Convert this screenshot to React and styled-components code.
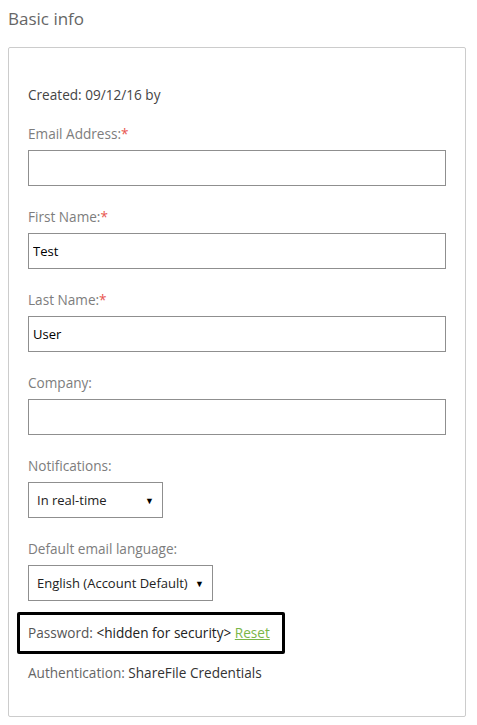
import React from "react";
import styled, { createGlobalStyle } from "styled-components";

const GlobalStyle = createGlobalStyle`
  html, body {
    margin: 0;
    padding: 0;
    background: #ffffff;
  }
  body {
    font-family: "Open Sans", "Noto Sans", sans-serif;
    -webkit-font-smoothing: antialiased;
  }
`;

const Page = styled.div`
  width: 477px;
  height: 725px;
  padding: 8px 11px 0 8px;
  box-sizing: border-box;
`;

const Title = styled.h2`
  margin: 0;
  font-size: 17px;
  font-weight: 400;
  line-height: 22px;
  color: #666666;
`;

const Panel = styled.section`
  margin-top: 17px;
  border: 1px solid #cccccc;
  border-radius: 2px;
  padding: 38px 19px 34px 19px;
  display: flex;
  flex-direction: column;
`;

const Created = styled.div`
  font-size: 13.6px;
  line-height: 18px;
  color: #444444;
  margin-bottom: 21px;
`;

const Field = styled.div`
  display: flex;
  flex-direction: column;
  margin-bottom: ${(p) => (p.$last ? 0 : 22)}px;
`;

const Label = styled.label`
  font-size: 13.6px;
  line-height: 18px;
  color: #7d7d7d;
  margin-bottom: 7px;

  span {
    color: #e8564f;
  }
`;

const TextInput = styled.input`
  box-sizing: border-box;
  width: 100%;
  height: 36px;
  border: 1px solid #8f8f8f;
  border-radius: 0;
  padding: 0 4px;
  font-family: inherit;
  font-size: 13px;
  color: #000000;
  outline: none;
`;

const SelectBox = styled.div`
  box-sizing: border-box;
  width: ${(p) => p.$width}px;
  height: 36px;
  border: 1px solid #8f8f8f;
  display: flex;
  align-items: center;
  justify-content: space-between;
  padding: 0 8px 0 8px;
  font-size: 13px;
  color: #222222;
`;

const Arrow = styled.span`
  font-size: 9px;
  color: #000000;
`;

const PasswordRow = styled.div`
  margin: 11px -11px 0 -11px;
  width: 268px;
  box-sizing: border-box;
  border: 3px solid #000000;
  border-radius: 2px;
  padding: 9px 8px;
  font-size: 13.6px;
  line-height: 18px;
  white-space: nowrap;
  color: #555555;

  strong {
    font-weight: 400;
    color: #222222;
  }

  a {
    color: #7ab648;
    text-decoration: underline;
  }
`;

const InfoLine = styled.div`
  margin-top: 10px;
  font-size: 13.6px;
  line-height: 18px;
  color: #666666;

  strong {
    font-weight: 400;
    color: #333333;
  }
`;

const fields = [
  { label: "Email Address:", required: true, value: "" },
  { label: "First Name:", required: true, value: "Test" },
  { label: "Last Name:", required: true, value: "User" },
  { label: "Company:", required: false, value: "" },
];

const App = () => {
  return (
    <>
      <GlobalStyle />
      <Page>
        <Title>Basic info</Title>
        <Panel>
          <Created>Created: 09/12/16 by</Created>
          {fields.map((f) => (
            <Field key={f.label}>
              <Label>
                {f.label}
                {f.required && <span>*</span>}
              </Label>
              <TextInput defaultValue={f.value} />
            </Field>
          ))}
          <Field>
            <Label>Notifications:</Label>
            <SelectBox $width={135}>
              In real-time <Arrow>▼</Arrow>
            </SelectBox>
          </Field>
          <Field $last>
            <Label>Default email language:</Label>
            <SelectBox $width={185}>
              English (Account Default) <Arrow>▼</Arrow>
            </SelectBox>
          </Field>
          <PasswordRow>
            Password: <strong>&lt;hidden for security&gt;</strong>{" "}
            <a href="#">Reset</a>
          </PasswordRow>
          <InfoLine>
            Authentication: <strong>ShareFile Credentials</strong>
          </InfoLine>
        </Panel>
      </Page>
    </>
  );
};

export default App;
